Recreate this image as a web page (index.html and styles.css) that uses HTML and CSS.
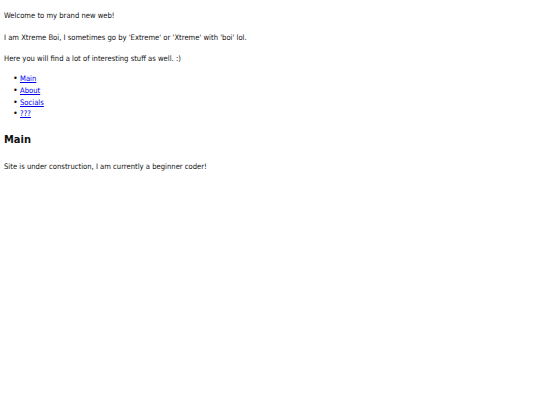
FILE: index.html
```html
<!DOCTYPE html>
<html>
<head>
<meta charset="utf-8">
<link rel="stylesheet" href="styles.css">
</head>
<body>
<p class="line">Welcome to my brand new web!</p>
<p class="line">I am Xtreme Boi, I sometimes go by 'Extreme' or 'Xtreme' with 'boi' lol.</p>
<p class="line">Here you will find a lot of interesting stuff as well. :)</p>
<ul class="nav">
<li><a href="#">Main</a></li>
<li><a href="#">About</a></li>
<li><a href="#">Socials</a></li>
<li><a href="#">???</a></li>
</ul>
<h2 class="title">Main</h2>
<p class="line">Site is under construction, I am currently a beginner coder!</p>
</body>
</html>
```
FILE: styles.css
```css
html {
  background: #fff;
}
body {
  margin: 0 4px;
  padding-top: 0;
  font-family: "DejaVu Sans Condensed", "DejaVu Sans", sans-serif;
  font-stretch: condensed;
  font-size: 7.6px;
  line-height: 11.7px;
  color: #111;
}
.line {
  margin: 10px 0 0;
}
.nav {
  margin: 8px 0 0;
  padding-left: 16px;
  list-style: none;
}
.nav li::before {
  content: "\2022";
  display: inline-block;
  width: 7px;
  margin-left: -7px;
  font-size: 9px;
}
.nav a {
  color: #0000ee;
}
.title {
  font-size: 11px;
  line-height: 18px;
  margin: 11px 0 12px;
}
```
